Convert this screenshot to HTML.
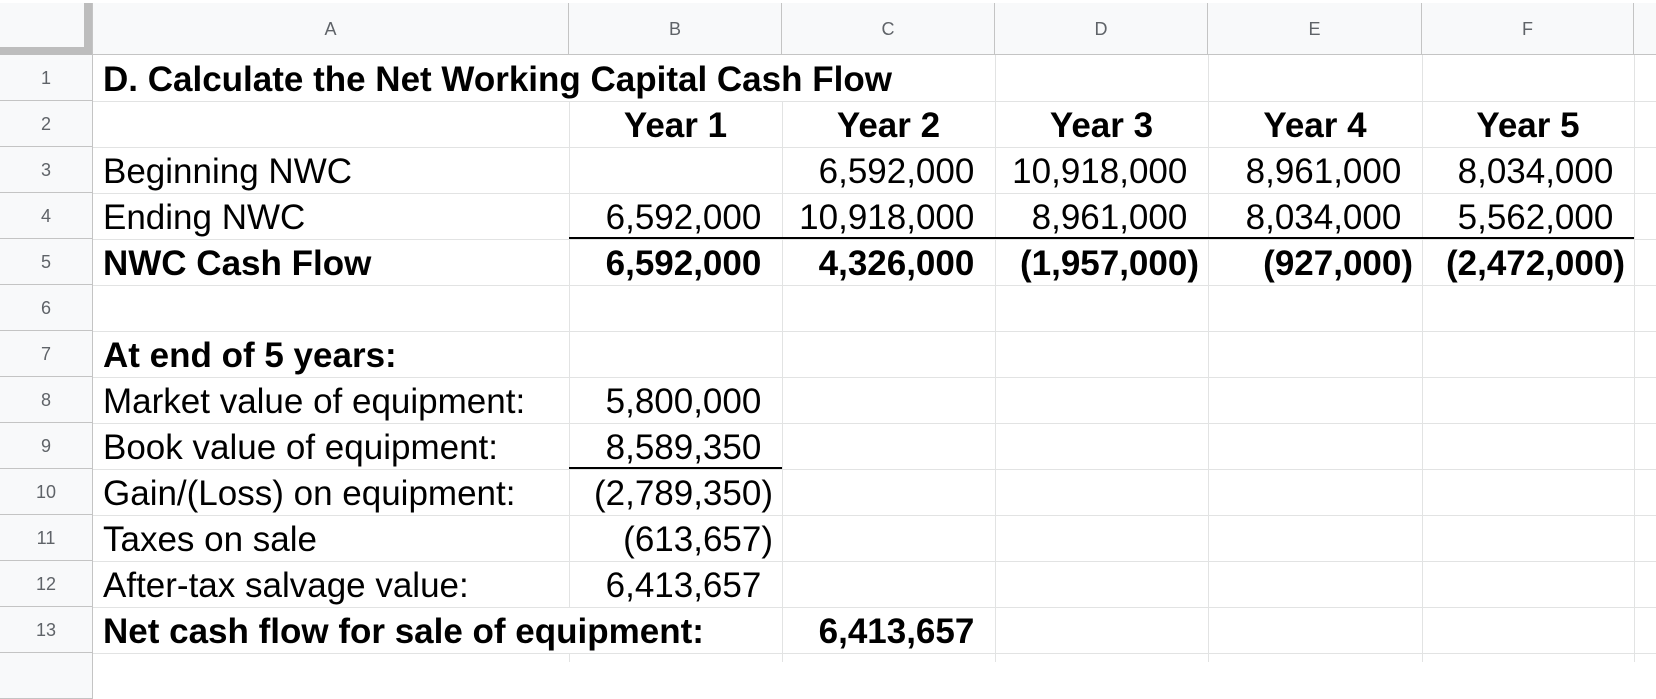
<!DOCTYPE html>
<html><head><meta charset="utf-8"><style>
body{margin:0;width:1656px;height:662px;overflow:hidden;background:#fff;font-family:"Liberation Sans",Arial,sans-serif;position:relative}
.c{position:absolute;box-sizing:border-box;height:46px;line-height:50px;font-size:35px;color:#000;white-space:nowrap}
.l{padding-left:10px;text-align:left}
.r{padding-right:9px;text-align:right}
.ct{text-align:center}
.b{font-weight:bold}
.h{position:absolute;box-sizing:border-box;background:#f8f9fa;border-right:1px solid #c4c4c4;border-bottom:1px solid #c4c4c4;color:#5f6368;font-size:18px;text-align:center}
.p{visibility:hidden}
</style></head><body>
<div style="position:absolute;left:0;top:0;width:1656px;height:4px;background:#fff;border-bottom:1px solid #c4c4c4;box-sizing:border-box"></div>
<div class="h" style="left:0;top:3px;width:93px;height:52px"></div>
<div style="position:absolute;left:84px;top:3px;width:8px;height:52px;background:#bdbdbd"></div>
<div style="position:absolute;left:0;top:47px;width:92px;height:8px;background:#bdbdbd"></div>
<div class="h" style="left:93px;top:3px;width:476px;height:52px;line-height:52px">A</div>
<div class="h" style="left:569px;top:3px;width:213px;height:52px;line-height:52px">B</div>
<div class="h" style="left:782px;top:3px;width:213px;height:52px;line-height:52px">C</div>
<div class="h" style="left:995px;top:3px;width:213px;height:52px;line-height:52px">D</div>
<div class="h" style="left:1208px;top:3px;width:214px;height:52px;line-height:52px">E</div>
<div class="h" style="left:1422px;top:3px;width:212px;height:52px;line-height:52px">F</div>
<div class="h" style="left:1634px;top:3px;width:30px;height:52px"></div>
<div class="h" style="left:0;top:55px;width:93px;height:46px;line-height:46px">1</div>
<div class="h" style="left:0;top:101px;width:93px;height:46px;line-height:46px">2</div>
<div class="h" style="left:0;top:147px;width:93px;height:46px;line-height:46px">3</div>
<div class="h" style="left:0;top:193px;width:93px;height:46px;line-height:46px">4</div>
<div class="h" style="left:0;top:239px;width:93px;height:46px;line-height:46px">5</div>
<div class="h" style="left:0;top:285px;width:93px;height:46px;line-height:46px">6</div>
<div class="h" style="left:0;top:331px;width:93px;height:46px;line-height:46px">7</div>
<div class="h" style="left:0;top:377px;width:93px;height:46px;line-height:46px">8</div>
<div class="h" style="left:0;top:423px;width:93px;height:46px;line-height:46px">9</div>
<div class="h" style="left:0;top:469px;width:93px;height:46px;line-height:46px">10</div>
<div class="h" style="left:0;top:515px;width:93px;height:46px;line-height:46px">11</div>
<div class="h" style="left:0;top:561px;width:93px;height:46px;line-height:46px">12</div>
<div class="h" style="left:0;top:607px;width:93px;height:46px;line-height:46px">13</div>
<div class="h" style="left:0;top:653px;width:93px;height:46px"></div>
<svg style="position:absolute;left:0;top:0" width="1656" height="662">
<g stroke="#e2e3e3" stroke-width="1">
<line x1="93" y1="101.5" x2="1656" y2="101.5"/>
<line x1="93" y1="147.5" x2="1656" y2="147.5"/>
<line x1="93" y1="193.5" x2="1656" y2="193.5"/>
<line x1="93" y1="239.5" x2="1656" y2="239.5"/>
<line x1="93" y1="285.5" x2="1656" y2="285.5"/>
<line x1="93" y1="331.5" x2="1656" y2="331.5"/>
<line x1="93" y1="377.5" x2="1656" y2="377.5"/>
<line x1="93" y1="423.5" x2="1656" y2="423.5"/>
<line x1="93" y1="469.5" x2="1656" y2="469.5"/>
<line x1="93" y1="515.5" x2="1656" y2="515.5"/>
<line x1="93" y1="561.5" x2="1656" y2="561.5"/>
<line x1="93" y1="607.5" x2="1656" y2="607.5"/>
<line x1="93" y1="653.5" x2="1656" y2="653.5"/>
<line x1="569.5" y1="101" x2="569.5" y2="607"/>
<line x1="782.5" y1="101" x2="782.5" y2="662"/>
<line x1="995.5" y1="55" x2="995.5" y2="662"/>
<line x1="1208.5" y1="55" x2="1208.5" y2="662"/>
<line x1="1422.5" y1="55" x2="1422.5" y2="662"/>
<line x1="1634.5" y1="55" x2="1634.5" y2="662"/>
<line x1="569.5" y1="653" x2="569.5" y2="662"/>
</g>
<line x1="569" y1="238" x2="1634" y2="238" stroke="#000" stroke-width="2"/>
<line x1="569" y1="468" x2="782" y2="468" stroke="#000" stroke-width="2"/>
</svg>
<div class="c l b" style="left:93px;top:55px;width:900px">D. Calculate the Net Working Capital Cash Flow</div>
<div class="c ct b" style="left:569px;top:101px;width:213px">Year 1</div>
<div class="c ct b" style="left:782px;top:101px;width:213px">Year 2</div>
<div class="c ct b" style="left:995px;top:101px;width:213px">Year 3</div>
<div class="c ct b" style="left:1208px;top:101px;width:214px">Year 4</div>
<div class="c ct b" style="left:1422px;top:101px;width:212px">Year 5</div>
<div class="c l" style="left:93px;top:147px;width:476px">Beginning NWC</div>
<div class="c r" style="left:782px;top:147px;width:213px">6,592,000<span class="p">)</span></div>
<div class="c r" style="left:995px;top:147px;width:213px">10,918,000<span class="p">)</span></div>
<div class="c r" style="left:1208px;top:147px;width:214px">8,961,000<span class="p">)</span></div>
<div class="c r" style="left:1422px;top:147px;width:212px">8,034,000<span class="p">)</span></div>
<div class="c l" style="left:93px;top:193px;width:476px">Ending NWC</div>
<div class="c r" style="left:569px;top:193px;width:213px">6,592,000<span class="p">)</span></div>
<div class="c r" style="left:782px;top:193px;width:213px">10,918,000<span class="p">)</span></div>
<div class="c r" style="left:995px;top:193px;width:213px">8,961,000<span class="p">)</span></div>
<div class="c r" style="left:1208px;top:193px;width:214px">8,034,000<span class="p">)</span></div>
<div class="c r" style="left:1422px;top:193px;width:212px">5,562,000<span class="p">)</span></div>
<div class="c l b" style="left:93px;top:239px;width:476px">NWC Cash Flow</div>
<div class="c r b" style="left:569px;top:239px;width:213px">6,592,000<span class="p">)</span></div>
<div class="c r b" style="left:782px;top:239px;width:213px">4,326,000<span class="p">)</span></div>
<div class="c r b" style="left:995px;top:239px;width:213px">(1,957,000)</div>
<div class="c r b" style="left:1208px;top:239px;width:214px">(927,000)</div>
<div class="c r b" style="left:1422px;top:239px;width:212px">(2,472,000)</div>
<div class="c l b" style="left:93px;top:331px;width:476px">At end of 5 years:</div>
<div class="c l" style="left:93px;top:377px;width:476px">Market value of equipment:</div>
<div class="c r" style="left:569px;top:377px;width:213px">5,800,000<span class="p">)</span></div>
<div class="c l" style="left:93px;top:423px;width:476px">Book value of equipment:</div>
<div class="c r" style="left:569px;top:423px;width:213px">8,589,350<span class="p">)</span></div>
<div class="c l" style="left:93px;top:469px;width:476px">Gain/(Loss) on equipment:</div>
<div class="c r" style="left:569px;top:469px;width:213px">(2,789,350)</div>
<div class="c l" style="left:93px;top:515px;width:476px">Taxes on sale</div>
<div class="c r" style="left:569px;top:515px;width:213px">(613,657)</div>
<div class="c l" style="left:93px;top:561px;width:476px">After-tax salvage value:</div>
<div class="c r" style="left:569px;top:561px;width:213px">6,413,657<span class="p">)</span></div>
<div class="c l b" style="left:93px;top:607px;width:700px">Net cash flow for sale of equipment:</div>
<div class="c r b" style="left:782px;top:607px;width:213px">6,413,657<span class="p">)</span></div>
</body></html>
